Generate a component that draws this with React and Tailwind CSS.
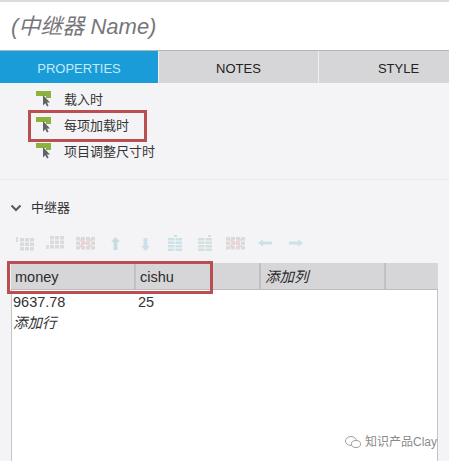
import React from 'react'

const SANS = "font-['Liberation_Sans','Noto_Sans_CJK_SC',sans-serif]"

function TriggerIcon() {
  return (
    <svg width="16" height="16" viewBox="0 0 16 16" className="shrink-0">
      <rect x="0" y="0" width="15" height="5" fill="#8ab23c" />
      <rect x="10" y="3" width="5" height="4" fill="#8ab23c" />
      <path d="M7 4 L7 14.5 L9.3 12.2 L11 15.5 L12.6 14.7 L11 11.5 L14 11.5 Z" fill="#5f6468" />
    </svg>
  )
}

function EventRow({ label, boxed }) {
  return (
    <div className="relative flex h-[26px] items-center gap-[12px] pl-[36px]">
      <TriggerIcon />
      <span className="text-[13px] leading-none text-[#333]">{label}</span>
      {boxed && (
        <div className="absolute left-[28px] top-[-2px] h-[32px] w-[119px] border-[3px] border-[#bb4e50]" />
      )}
    </div>
  )
}

function Tab({ label, active }) {
  return (
    <div
      className={
        active
          ? 'flex h-full w-[158px] shrink-0 items-center justify-center bg-[#1a9cd8] pt-[3px] text-[13px] text-[#c4eafb]'
          : 'flex h-full w-[160px] shrink-0 items-center justify-center border-l border-[#eeeef0] bg-[#d6d6d8] pt-[3px] text-[13px] text-[#222]'
      }
    >
      {label}
    </div>
  )
}

// cell grid used by the repeater toolbar buttons
function Cells({ x, y, cols, rows, w, h, fill }) {
  const out = []
  for (let r = 0; r < rows; r++) {
    for (let c = 0; c < cols; c++) {
      out.push(<rect key={`${r}-${c}`} x={x + c * (w + 1)} y={y + r * (h + 1)} width={w} height={h} fill={fill} />)
    }
  }
  return out
}

const GREY = '#d8dadb'
const RED = '#edd5d3'
const BLUE = '#cde1ea'

function ToolIcon({ kind }) {
  return (
    <svg width="21" height="17" viewBox="0 0 21 17" className="shrink-0">
      {kind === 'rowAbove' && (
        <>
          <Cells x={5} y={3} cols={3} rows={3} w={4} h={3.5} fill={GREY} />
          <rect x="1" y="2" width="2" height="5" fill={BLUE} />
        </>
      )}
      {kind === 'rowBelow' && (
        <>
          <Cells x={5} y={1} cols={3} rows={3} w={4} h={3.5} fill={GREY} />
          <rect x="1" y="10" width="3" height="4" fill={BLUE} />
        </>
      )}
      {(kind === 'rowDelete' || kind === 'colDelete') && (
        <>
          <Cells x={1} y={2} cols={4} rows={3} w={4} h={3.5} fill={GREY} />
          <path d="M2 3 L19 13 M2 13 L19 3" stroke={RED} strokeWidth="2" />
        </>
      )}
      {kind === 'up' && <path d="M10.5 2 L15 7 L12.5 7 L12.5 15 L8.5 15 L8.5 7 L6 7 Z" fill="#c9dde0" />}
      {kind === 'down' && <path d="M10.5 16 L15 11 L12.5 11 L12.5 3 L8.5 3 L8.5 11 L6 11 Z" fill={BLUE} />}
      {kind === 'colLeft' && (
        <>
          <rect x="9" y="0" width="3" height="2" fill={GREY} />
          <Cells x={3} y={3} cols={2} rows={4} w={6.5} h={2.5} fill={BLUE} />
        </>
      )}
      {kind === 'colRight' && (
        <>
          <rect x="13" y="0" width="3" height="2" fill={GREY} />
          <Cells x={3} y={3} cols={2} rows={4} w={6.5} h={2.5} fill="#d3e0e0" />
        </>
      )}
      {kind === 'left' && <path d="M3 8 L8 4.5 L8 6.5 L17 6.5 L17 9.5 L8 9.5 L8 11.5 Z" fill={BLUE} />}
      {kind === 'right' && <path d="M18 8 L13 4.5 L13 6.5 L4 6.5 L4 9.5 L13 9.5 L13 11.5 Z" fill={BLUE} />}
    </svg>
  )
}

const TOOLS = ['rowAbove', 'rowBelow', 'rowDelete', 'up', 'down', 'colLeft', 'colRight', 'colDelete', 'left', 'right']

function App() {
  return (
    <div className={`relative flex h-[461px] w-[449px] flex-col overflow-hidden bg-[#f4f4f6] ${SANS}`}>
      <div className="h-[2px] bg-[#dcdcdc]" />
      <div className="flex h-[48px] items-center bg-white pl-[11px] text-[22px] italic text-[#77777b]">
        (中继器 Name)
      </div>
      <div className="flex h-[33px] border-t border-[#b5b5b5]">
        <Tab label="PROPERTIES" active />
        <Tab label="NOTES" />
        <Tab label="STYLE" />
      </div>

      <div className="flex flex-col pt-[3px]">
        <EventRow label="载入时" />
        <EventRow label="每项加载时" boxed />
        <EventRow label="项目调整尺寸时" />
      </div>

      <div className="mt-[15px] border-t border-[#e8e8ea]" />

      <div className="mt-[18px] flex items-center gap-[9px] pl-[10px] text-[13px] text-[#333]">
        <svg width="12" height="8" viewBox="0 0 12 8">
          <path d="M1.5 1.5 L6 6 L10.5 1.5" fill="none" stroke="#55595e" strokeWidth="2" />
        </svg>
        中继器
      </div>

      <div className="mt-[17px] flex gap-[9px] pl-[15px] blur-[0.5px]">
        {TOOLS.map((t) => (
          <ToolIcon key={t} kind={t} />
        ))}
      </div>

      <div className="relative ml-[11px] mt-[11px] flex w-[427px] flex-1 flex-col">
        <div className="flex h-[27px] border-b border-[#bdbdbd] bg-[#d6d6d8] text-[14.5px] text-[#2b2b2b]">
          <div className="flex w-[125px] items-center border-r-2 border-[#c0c0c2] pl-[4px] pt-[5px]">money</div>
          <div className="flex w-[125px] items-center border-r-2 border-[#c0c0c2] pl-[4px] pt-[5px]">cishu</div>
          <div className="flex w-[125px] items-center border-r-2 border-[#c0c0c2] pl-[4px] pt-[5px] italic">添加列</div>
          <div className="flex-1" />
        </div>
        <div className="flex-1 border-x border-[#c4c4c6] bg-white pt-[2px] text-[14.5px] text-[#333]">
          <div className="flex h-[23px] items-center pl-[1px]">
            <span className="w-[125px]">9637.78</span>
            <span>25</span>
          </div>
          <div className="flex h-[18px] items-center pl-[1px] italic">添加行</div>
        </div>
        <div className="absolute left-[-4px] top-[-2px] h-[33px] w-[206px] border-[3px] border-[#bb4e50]" />
      </div>

      <div className="absolute bottom-[10px] right-[12px] flex items-center gap-[4px] text-[12px] text-[#8a8a8a]">
        <svg width="16" height="14" viewBox="0 0 16 14" fill="none" stroke="#a0a0a0" strokeWidth="1">
          <ellipse cx="6" cy="6" rx="5.5" ry="4.5" />
          <ellipse cx="11" cy="9" rx="4.5" ry="3.5" fill="#fff" />
        </svg>
        <span>知识产品Clay</span>
      </div>
    </div>
  )
}

export default App
